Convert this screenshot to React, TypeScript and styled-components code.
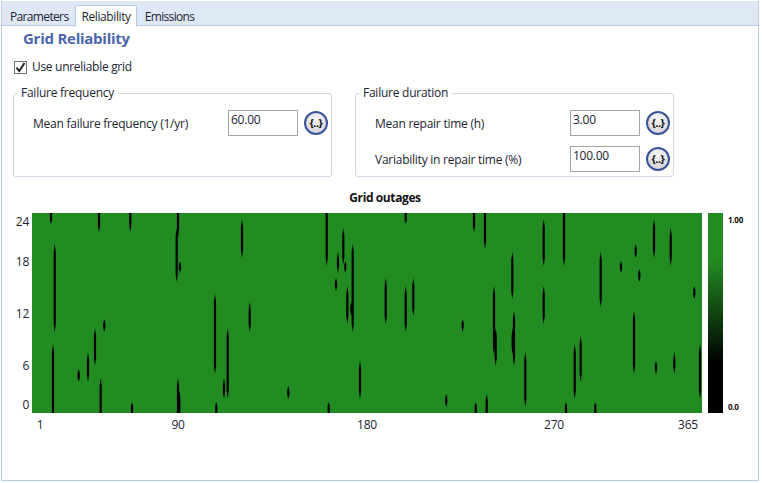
import { FC } from 'react';
import styled, { createGlobalStyle } from 'styled-components';

const Global = createGlobalStyle`
html, body {
  margin: 0;
  background: #fff;
}
#root {
  width: 762px;
  height: 483px;
  padding: 1px 0 0 1px;
  box-sizing: border-box;
}
`

const Frame = styled.div`
width: 758px;
height: 480px;
box-sizing: border-box;
border: 1px solid #b9cbe0;
border-top: none;
font: 12px/16px "Open Sans", "Noto Sans", sans-serif;
letter-spacing: -0.25px;
color: #1c2433;
`
const TabStrip = styled.div`
display: flex;
height: 25px;
box-sizing: border-box;
padding: 4px 0 0 0;
background: #dfe8f5;
border-bottom: 1px solid #b9cbe0;
`
const Tab = styled.div<{ $active?: boolean }>`
height: ${p => (p.$active ? 22 : 21)}px;
box-sizing: border-box;
padding: 4px 7px 0 8px;
letter-spacing: -0.65px;
white-space: nowrap;
${p => p.$active && `
  background: #fff;
  border: 1px solid #b9cbe0;
  border-bottom: none;
  border-radius: 2px 2px 0 0;
  padding: 3px 5px 0;
  letter-spacing: -0.4px;
`}
`
const Content = styled.div`
padding: 2px 11px 0;
`
const Heading = styled.h1`
margin: 0 0 0 10px;
font: 700 15px/20px "Open Sans", "Noto Sans", sans-serif;
letter-spacing: -0.25px;
color: #4a66ac;
`
const CheckRow = styled.label`
display: flex;
align-items: center;
gap: 5px;
height: 16px;
margin: 11px 0 0 1px;
letter-spacing: -0.3px;
`
const CheckBox = styled.span`
display: flex;
align-items: center;
justify-content: center;
width: 13px;
height: 13px;
box-sizing: border-box;
border: 1px solid #707070;
background: #fff;
`
const Groups = styled.div`
display: flex;
gap: 23px;
margin-top: 10px;
`
const Group = styled.fieldset`
width: 319px;
height: 92px;
box-sizing: border-box;
margin: 0;
padding: 9px 0 0 19px;
border: 1px solid #cdd8e4;
border-radius: 3px;
legend {
  margin-left: -16px;
  padding: 0 4px;
  line-height: 16px;
}
`
const ParamRow = styled.div`
display: flex;
align-items: center;
height: 26px;
margin-bottom: 10px;
`
const ParamLabel = styled.span`
width: 195px;
padding-top: 1px;
`
const ParamInput = styled.input`
width: 70px;
height: 26px;
box-sizing: border-box;
padding: 0 2px 8px;
margin: 0 6px 0 0;
border: 1px solid #a5a5a5;
outline: none;
font: inherit;
letter-spacing: inherit;
color: inherit;
`
const FormulaButton = styled.button`
width: 24px;
height: 24px;
box-sizing: border-box;
padding: 0;
border: 2px solid #3a5499;
border-radius: 50%;
background: radial-gradient(circle at 50% 30%, #f7f7f7, #d0d0d4);
font: 700 11px/18px "Open Sans", sans-serif;
letter-spacing: -0.5px;
color: #111;
`
const ChartTitle = styled.div`
margin: 13px 0 0 0;
padding-left: 10px;
text-align: center;
font-weight: 700;
letter-spacing: -0.4px;
color: #111;
`
const ChartRow = styled.div`
display: flex;
height: 200px;
margin-top: 7px;
`
const YAxis = styled.div`
display: grid;
grid-template-rows: 18px 62px 42px 62px 16px;
width: 19px;
padding-right: 3px;
box-sizing: border-box;
text-align: right;
span {
  align-self: center;
}
`
const Heatmap = styled.svg`
display: block;
width: 670px;
height: 200px;
background: #228b22;
`
const ColorBar = styled.div`
width: 15px;
height: 200px;
margin-left: 6px;
background: linear-gradient(#228b22 0, #228b22 24%, #000 75%, #000 100%);
`
const BarLabels = styled.div`
display: flex;
flex-direction: column;
justify-content: space-between;
margin-left: 5px;
padding-top: 1px;
font: 700 8px/12px "Open Sans", sans-serif;
color: #111;
`
const XAxis = styled.div`
display: grid;
grid-template-columns: 16px 260px 118px 256px 12px;
margin: 4px 0 0 19px;
span {
  justify-self: center;
}
`

// [x, top, bottom] of each outage, in chart pixels
const outages: [number, number, number][] = [
  [19, 0, 11], [67, 0, 19], [98.3, 0, 19], [146, 0, 25], [144.7, 15, 69], [148, 48, 60],
  [22.7, 31, 119], [210, 6, 45], [183, 81, 161], [217.7, 89, 119], [72.3, 106, 119], [63, 115, 153],
  [56, 139, 169], [46.7, 156, 169], [21, 131, 200], [68.7, 165, 200], [100, 189, 200],
  [146, 165, 200], [147.3, 178, 200], [184.3, 189, 200], [192, 165, 186], [195.7, 115, 186],
  [294.7, 0, 53], [373.7, 0, 11], [442, 0, 19], [453, 0, 36], [311.3, 15, 52], [306, 39, 60],
  [313.3, 48, 60], [320.7, 31, 119], [480.3, 39, 86], [304, 65, 78], [315.3, 73, 111], [319.3, 89, 103],
  [353.7, 65, 111], [373.7, 73, 119], [381.3, 65, 103], [462, 73, 142], [463.7, 115, 153],
  [482, 98, 153], [480.7, 115, 142], [430.7, 106, 119], [328, 148, 186], [256.3, 173, 186],
  [296.7, 189, 200], [414.3, 181, 194], [443.7, 189, 200], [454.7, 181, 200],
  [511.7, 6, 53], [532, 0, 53], [622, 6, 45], [638.7, 15, 53], [603.7, 31, 45], [568.7, 39, 94],
  [589, 48, 60], [607.3, 56, 69], [511.7, 73, 111], [662.3, 73, 86], [602, 98, 161], [548.7, 123, 169],
  [542.7, 131, 186], [493.3, 139, 194], [624, 148, 161], [642.3, 139, 161], [668, 131, 186],
  [534, 189, 200], [563.3, 189, 200],
]

const outagePath = ([x, top, bottom]: [number, number, number]) => {
  const taper = Math.min(8, (bottom - top) / 3)
  const w = 1.1
  // runs past the chart edge where the outage is cut off there
  const y1 = top === 0 ? -taper : top
  const y2 = bottom === 200 ? 200 + taper : bottom
  return `M${x} ${y1} L${x + w} ${y1 + taper} L${x + w} ${y2 - taper} L${x} ${y2} L${x - w} ${y2 - taper} L${x - w} ${y1 + taper} Z`
}

const Param: FC<{ label: string, value: string }> = ({ label, value }) => (
  <ParamRow>
    <ParamLabel>{label}</ParamLabel>
    <ParamInput readOnly value={value} />
    <FormulaButton>{'{..}'}</FormulaButton>
  </ParamRow>
)

const App: FC = () => (
  <>
    <Global />
    <Frame>
      <TabStrip>
        <Tab>Parameters</Tab>
        <Tab $active>Reliability</Tab>
        <Tab>Emissions</Tab>
      </TabStrip>
      <Content>
        <Heading>Grid Reliability</Heading>
        <CheckRow>
          <CheckBox>
            <svg width="11" height="11" viewBox="0 0 11 11">
              <path d="M1.5 5.5 L4.2 9 L9.5 1" fill="none" stroke="#222" strokeWidth="2" />
            </svg>
          </CheckBox>
          Use unreliable grid
        </CheckRow>
        <Groups>
          <Group>
            <legend>Failure frequency</legend>
            <Param label="Mean failure frequency (1/yr)" value="60.00" />
          </Group>
          <Group>
            <legend>Failure duration</legend>
            <Param label="Mean repair time (h)" value="3.00" />
            <Param label="Variability in repair time (%)" value="100.00" />
          </Group>
        </Groups>
        <ChartTitle>Grid outages</ChartTitle>
        <ChartRow>
          <YAxis>
            <span>24</span>
            <span>18</span>
            <span>12</span>
            <span>6</span>
            <span>0</span>
          </YAxis>
          <Heatmap viewBox="0 0 670 200">
            {outages.map((o, i) => (
              <path key={i} d={outagePath(o)} fill="#000" />
            ))}
          </Heatmap>
          <ColorBar />
          <BarLabels>
            <span>1.00</span>
            <span>0.0</span>
          </BarLabels>
        </ChartRow>
        <XAxis>
          <span>1</span>
          <span>90</span>
          <span>180</span>
          <span>270</span>
          <span>365</span>
        </XAxis>
      </Content>
    </Frame>
  </>
)

export default App
